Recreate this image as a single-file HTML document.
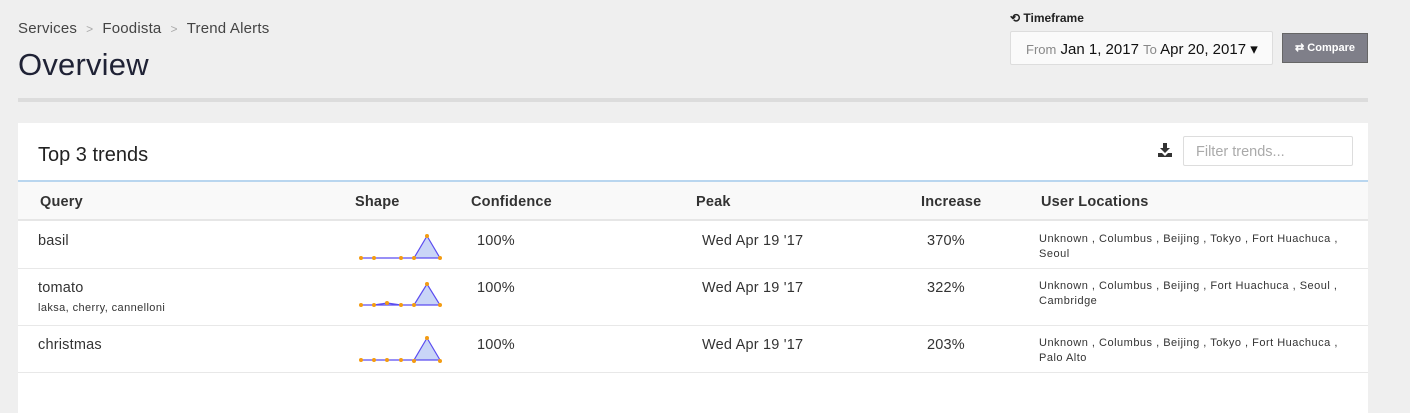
<!DOCTYPE html>
<html><head><style>
*{margin:0;padding:0;box-sizing:border-box}
body{width:1410px;height:405px;background:#efefef;font-family:"Liberation Sans",sans-serif;color:#333;position:relative;overflow:hidden}
.a{position:absolute;white-space:nowrap}
.bc{top:20px;left:18px;font-size:15px;color:#444;letter-spacing:.2px}
.bc span{color:#aaa;margin:0 9px;font-size:12px}
.h1{top:47px;left:18px;font-size:31px;color:#1f2235;letter-spacing:.2px}
.hr{left:18px;top:98px;width:1350px;height:4px;background:#dcdcdc}
.card{left:18px;top:123px;width:1350px;height:290px;background:#fff}
.th{font-weight:bold;font-size:14.5px;color:#333;top:194px;letter-spacing:.2px}
.td{font-size:14.5px;color:#333;letter-spacing:.2px}
.loc{font-size:11px;color:#333;line-height:15px;letter-spacing:.5px}
.rowline{left:18px;width:1350px;height:1px;background:#e8e8e8}
</style></head><body>
<div class="a bc">Services<span>&gt;</span>Foodista<span>&gt;</span>Trend Alerts</div>
<div class="a h1">Overview</div>
<div class="a" style="left:1010px;top:11px;font-size:12px;font-weight:bold;color:#222">⟲ Timeframe</div>
<div class="a" style="left:1010px;top:31px;width:263px;height:34px;background:#fafafa;border:1px solid #ddd;border-radius:2px;font-size:15px;padding:8px 0 0 15px;color:#111"><span style="color:#888;font-size:13px">From</span> Jan 1, 2017 <span style="color:#888;font-size:13px">To</span> Apr 20, 2017 ▾</div>
<div class="a" style="left:1282px;top:33px;width:86px;height:30px;background:#7f7f89;border:1px solid #666;color:#fff;font-size:11px;font-weight:bold;text-align:center;line-height:29px">⇄ Compare</div>
<div class="a hr"></div>
<div class="a card"></div>
<div class="a" style="left:38px;top:144px;font-size:20px;color:#222">Top 3 trends</div>
<svg class="a" style="left:1158px;top:143px" width="14" height="14"><path d="M5 0h4v5h3l-5 5-5-5h3z M0 10h4l3 3 3-3h4v4H0z" fill="#333"/></svg>
<div class="a" style="left:1183px;top:136px;width:170px;height:30px;border:1px solid #ddd;border-radius:2px;font-size:14.5px;color:#aaa;padding:7px 12px">Filter trends...</div>
<div class="a" style="left:18px;top:180px;width:1350px;height:41px;background:#f9f9f9;border-top:2px solid #b9d6ef;border-bottom:2px solid #e6e6e6"></div>
<div class="a th" style="left:40px">Query</div>
<div class="a th" style="left:355px">Shape</div>
<div class="a th" style="left:471px">Confidence</div>
<div class="a th" style="left:696px">Peak</div>
<div class="a th" style="left:921px">Increase</div>
<div class="a th" style="left:1041px">User Locations</div>

<div class="a td" style="left:38px;top:233px">basil</div>
<div class="a td" style="left:477px;top:233px">100%</div>
<div class="a td" style="left:702px;top:233px">Wed Apr 19 '17</div>
<div class="a td" style="left:927px;top:233px">370%</div>
<div class="a loc" style="left:1039px;top:232px">Unknown , Columbus , Beijing , Tokyo , Fort Huachuca ,<br>Seoul</div>
<div class="a rowline" style="top:268px"></div>

<div class="a td" style="left:38px;top:280px">tomato</div>
<div class="a" style="left:38px;top:302px;font-size:11px;letter-spacing:.4px">laksa, cherry, cannelloni</div>
<div class="a td" style="left:477px;top:280px">100%</div>
<div class="a td" style="left:702px;top:280px">Wed Apr 19 '17</div>
<div class="a td" style="left:927px;top:280px">322%</div>
<div class="a loc" style="left:1039px;top:279px">Unknown , Columbus , Beijing , Fort Huachuca , Seoul ,<br>Cambridge</div>
<div class="a rowline" style="top:325px"></div>

<div class="a td" style="left:38px;top:337px">christmas</div>
<div class="a td" style="left:477px;top:337px">100%</div>
<div class="a td" style="left:702px;top:337px">Wed Apr 19 '17</div>
<div class="a td" style="left:927px;top:337px">203%</div>
<div class="a loc" style="left:1039px;top:336px">Unknown , Columbus , Beijing , Tokyo , Fort Huachuca ,<br>Palo Alto</div>
<div class="a rowline" style="top:372px"></div>

<svg class="a" style="left:0;top:0" width="1410" height="405">
<g stroke="#5b4cf0" stroke-width="1.2" fill="#c9d5f7">
<path d="M361 258 L414 258 L427 236 L440 258 Z"/>
<path d="M361 305 L374 305 L387 303 L401 305 L414 305 L427 284 L440 305 Z"/>
<path d="M361 360 L414 360 L427 338 L440 360 Z"/>
</g>
<g fill="#f39c12">
<circle cx="361" cy="258" r="2"/><circle cx="374" cy="258" r="2"/><circle cx="401" cy="258" r="2"/><circle cx="414" cy="258" r="2"/><circle cx="427" cy="236" r="2"/><circle cx="440" cy="258" r="2"/>
<circle cx="361" cy="305" r="2"/><circle cx="374" cy="305" r="2"/><circle cx="387" cy="303" r="2"/><circle cx="401" cy="305" r="2"/><circle cx="414" cy="305" r="2"/><circle cx="427" cy="284" r="2"/><circle cx="440" cy="305" r="2"/>
<circle cx="361" cy="360" r="2"/><circle cx="374" cy="360" r="2"/><circle cx="387" cy="360" r="2"/><circle cx="401" cy="360" r="2"/><circle cx="414" cy="361" r="2"/><circle cx="427" cy="338" r="2"/><circle cx="440" cy="361" r="2"/>
</g>
</svg>
</body></html>
